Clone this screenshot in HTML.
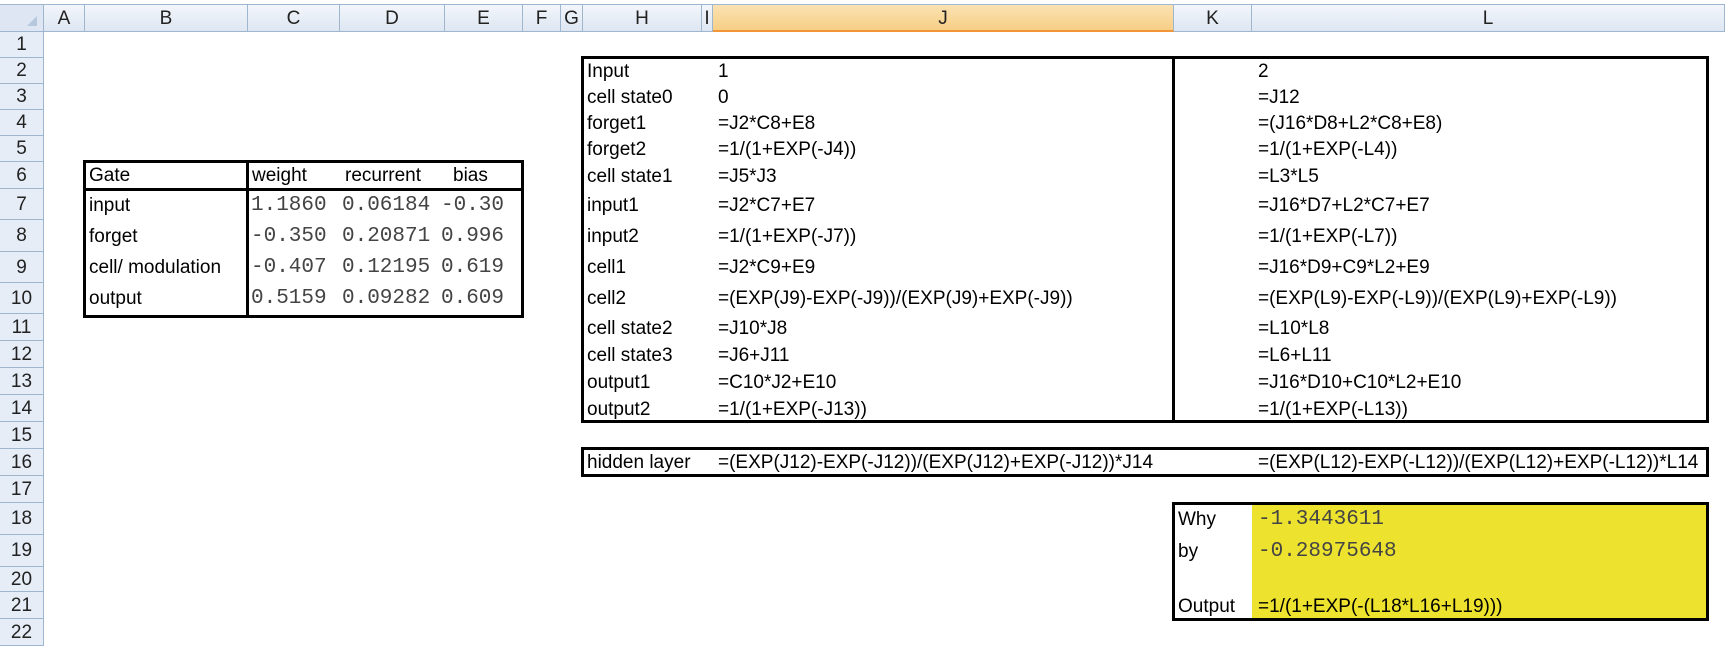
<!DOCTYPE html>
<html><head><meta charset="utf-8"><style>
*{margin:0;padding:0;box-sizing:border-box}
body{width:1725px;height:633px;overflow:hidden;background:#fff;position:relative;font-family:"Liberation Sans",Arial,sans-serif;font-size:19px;color:#000}
.ch{position:absolute;top:4px;height:28px;background:linear-gradient(#f3f6fb,#dde6f2);border-right:1px solid #9eb6ce;border-bottom:1px solid #9eb6ce;border-top:1px solid #9eb6ce;text-align:center;font-size:19px;line-height:27px;color:#222}
.rh{position:absolute;left:0;width:44px;background:#e6edf7;border-bottom:1px solid #9eb6ce;border-right:1px solid #9eb6ce;text-align:center;font-size:19px;color:#222}
.t{position:absolute;white-space:nowrap;overflow:hidden;line-height:1}
.m{font-family:"Liberation Mono","Courier New",monospace;font-size:21px;color:#444}
.box{position:absolute;border:3px solid #000}
</style></head><body>
<div class="ch" style="left:0;width:44px;background:#dde6f2"><span style="position:absolute;right:6px;bottom:5px;width:0;height:0;border-left:10px solid transparent;border-bottom:10px solid #b7c8dd"></span></div>
<div class="ch" style="left:44px;width:41px">A</div>
<div class="ch" style="left:85px;width:163px">B</div>
<div class="ch" style="left:248px;width:92px">C</div>
<div class="ch" style="left:340px;width:105px">D</div>
<div class="ch" style="left:445px;width:78px">E</div>
<div class="ch" style="left:523px;width:38px">F</div>
<div class="ch" style="left:561px;width:22px">G</div>
<div class="ch" style="left:583px;width:119px">H</div>
<div class="ch" style="left:702px;width:11px">I</div>
<div class="ch" style="left:713px;width:461px;background:linear-gradient(#fbe2b3,#f7cf86);border-bottom:2px solid #f29536">J</div>
<div class="ch" style="left:1174px;width:78px">K</div>
<div class="ch" style="left:1252px;width:473px">L</div>

<div class="rh" style="top:32px;height:26px;line-height:26px">1</div>
<div class="rh" style="top:58px;height:26px;line-height:26px">2</div>
<div class="rh" style="top:84px;height:26px;line-height:26px">3</div>
<div class="rh" style="top:110px;height:26px;line-height:26px">4</div>
<div class="rh" style="top:136px;height:26px;line-height:26px">5</div>
<div class="rh" style="top:162px;height:27px;line-height:27px">6</div>
<div class="rh" style="top:189px;height:31px;line-height:31px">7</div>
<div class="rh" style="top:220px;height:32px;line-height:32px">8</div>
<div class="rh" style="top:252px;height:31px;line-height:31px">9</div>
<div class="rh" style="top:283px;height:31px;line-height:31px">10</div>
<div class="rh" style="top:314px;height:27px;line-height:27px">11</div>
<div class="rh" style="top:341px;height:27px;line-height:27px">12</div>
<div class="rh" style="top:368px;height:27px;line-height:27px">13</div>
<div class="rh" style="top:395px;height:27px;line-height:27px">14</div>
<div class="rh" style="top:422px;height:27px;line-height:27px">15</div>
<div class="rh" style="top:449px;height:27px;line-height:27px">16</div>
<div class="rh" style="top:476px;height:27px;line-height:27px">17</div>
<div class="rh" style="top:503px;height:32px;line-height:32px">18</div>
<div class="rh" style="top:535px;height:32px;line-height:32px">19</div>
<div class="rh" style="top:567px;height:25px;line-height:25px">20</div>
<div class="rh" style="top:592px;height:27px;line-height:27px">21</div>
<div class="rh" style="top:619px;height:27px;line-height:27px">22</div>

<!-- Gate table -->
<div class="box" style="left:83px;top:160px;width:441px;height:158px"></div>
<div style="position:absolute;left:246px;top:160px;width:3px;height:158px;background:#000"></div>
<div style="position:absolute;left:83px;top:188px;width:441px;height:3px;background:#000"></div>
<div class="t" style="left:89px;top:166px">Gate</div>
<div class="t" style="left:252px;top:166px">weight</div>
<div class="t" style="left:345px;top:166px">recurrent</div>
<div class="t" style="left:453px;top:166px">bias</div>
<div class="t" style="left:89px;top:196px">input</div>
<div class="t" style="left:89px;top:227px">forget</div>
<div class="t" style="left:89px;top:258px">cell/ modulation</div>
<div class="t" style="left:89px;top:289px">output</div>
<div class="t m" style="left:251px;top:195px">1.1860</div>
<div class="t m" style="left:342px;top:195px">0.06184</div>
<div class="t m" style="left:441px;top:195px;width:80px">-0.30</div>
<div class="t m" style="left:251px;top:226px">-0.350</div>
<div class="t m" style="left:342px;top:226px">0.20871</div>
<div class="t m" style="left:441px;top:226px;width:80px">0.996</div>
<div class="t m" style="left:251px;top:257px">-0.407</div>
<div class="t m" style="left:342px;top:257px">0.12195</div>
<div class="t m" style="left:441px;top:257px;width:80px">0.619</div>
<div class="t m" style="left:251px;top:288px">0.5159</div>
<div class="t m" style="left:342px;top:288px">0.09282</div>
<div class="t m" style="left:441px;top:288px;width:80px">0.609</div>

<!-- main table -->
<div class="box" style="left:581px;top:56px;width:1128px;height:367px"></div>
<div style="position:absolute;left:1172px;top:56px;width:3px;height:367px;background:#000"></div>
<div class="t" style="left:587px;top:62px">Input</div><div class="t" style="left:718px;top:62px">1</div><div class="t" style="left:1258px;top:62px">2</div>
<div class="t" style="left:587px;top:88px">cell state0</div><div class="t" style="left:718px;top:88px">0</div><div class="t" style="left:1258px;top:88px">=J12</div>
<div class="t" style="left:587px;top:114px">forget1</div><div class="t" style="left:718px;top:114px">=J2*C8+E8</div><div class="t" style="left:1258px;top:114px">=(J16*D8+L2*C8+E8)</div>
<div class="t" style="left:587px;top:140px">forget2</div><div class="t" style="left:718px;top:140px">=1/(1+EXP(-J4))</div><div class="t" style="left:1258px;top:140px">=1/(1+EXP(-L4))</div>
<div class="t" style="left:587px;top:167px">cell state1</div><div class="t" style="left:718px;top:167px">=J5*J3</div><div class="t" style="left:1258px;top:167px">=L3*L5</div>
<div class="t" style="left:587px;top:196px">input1</div><div class="t" style="left:718px;top:196px">=J2*C7+E7</div><div class="t" style="left:1258px;top:196px">=J16*D7+L2*C7+E7</div>
<div class="t" style="left:587px;top:227px">input2</div><div class="t" style="left:718px;top:227px">=1/(1+EXP(-J7))</div><div class="t" style="left:1258px;top:227px">=1/(1+EXP(-L7))</div>
<div class="t" style="left:587px;top:258px">cell1</div><div class="t" style="left:718px;top:258px">=J2*C9+E9</div><div class="t" style="left:1258px;top:258px">=J16*D9+C9*L2+E9</div>
<div class="t" style="left:587px;top:289px">cell2</div><div class="t" style="left:718px;top:289px">=(EXP(J9)-EXP(-J9))/(EXP(J9)+EXP(-J9))</div><div class="t" style="left:1258px;top:289px">=(EXP(L9)-EXP(-L9))/(EXP(L9)+EXP(-L9))</div>
<div class="t" style="left:587px;top:319px">cell state2</div><div class="t" style="left:718px;top:319px">=J10*J8</div><div class="t" style="left:1258px;top:319px">=L10*L8</div>
<div class="t" style="left:587px;top:346px">cell state3</div><div class="t" style="left:718px;top:346px">=J6+J11</div><div class="t" style="left:1258px;top:346px">=L6+L11</div>
<div class="t" style="left:587px;top:373px">output1</div><div class="t" style="left:718px;top:373px">=C10*J2+E10</div><div class="t" style="left:1258px;top:373px">=J16*D10+C10*L2+E10</div>
<div class="t" style="left:587px;top:400px">output2</div><div class="t" style="left:718px;top:400px">=1/(1+EXP(-J13))</div><div class="t" style="left:1258px;top:400px">=1/(1+EXP(-L13))</div>

<!-- hidden layer -->
<div class="box" style="left:581px;top:447px;width:1128px;height:30px"></div>
<div class="t" style="left:587px;top:453px">hidden layer</div>
<div class="t" style="left:718px;top:453px">=(EXP(J12)-EXP(-J12))/(EXP(J12)+EXP(-J12))*J14</div>
<div class="t" style="left:1258px;top:453px">=(EXP(L12)-EXP(-L12))/(EXP(L12)+EXP(-L12))*L14</div>

<!-- output box -->
<div style="position:absolute;left:1252px;top:503px;width:457px;height:117px;background:#ede22e"></div>
<div class="box" style="left:1172px;top:502px;width:537px;height:119px"></div>
<div class="t" style="left:1178px;top:510px">Why</div>
<div class="t m" style="left:1258px;top:509px">-1.3443611</div>
<div class="t" style="left:1178px;top:542px">by</div>
<div class="t m" style="left:1258px;top:541px">-0.28975648</div>
<div class="t" style="left:1178px;top:597px">Output</div>
<div class="t" style="left:1258px;top:597px">=1/(1+EXP(-(L18*L16+L19)))</div>
</body></html>
